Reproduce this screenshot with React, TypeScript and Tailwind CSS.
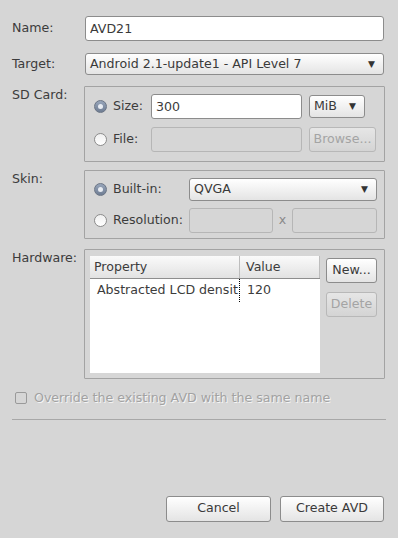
import React from 'react'

const btn =
  'flex items-center justify-center rounded-[3px] border border-[#8c8c8c] bg-gradient-to-b from-white to-[#e4e4e4] text-[#3a3a3a]'
const btnDisabled =
  'flex items-center justify-center rounded-[3px] border border-[#b8b8b8] bg-gradient-to-b from-[#e6e6e6] to-[#d4d4d4] text-[#a4a4a4]'
const field = 'rounded-[3px] border border-[#8c8c8c] bg-white px-[4px] text-[#3a3a3a] outline-none'
const fieldDisabled = 'rounded-[3px] border border-[#b6b6b6] bg-[#d6d6d6]'
const group = 'rounded-[1px] border border-[#a3a3a3]'

function Radio({ checked, label, width }: { checked: boolean; label: string; width: string }) {
  return (
    <div className={`flex items-center ${width}`}>
      {checked ? (
        <span className="flex h-[13px] w-[13px] items-center justify-center rounded-full border border-[#6b7585] bg-gradient-to-b from-[#98a6bb] to-[#6f7d93]">
          <span className="h-[5px] w-[5px] rounded-full bg-[#e8ecf2]" />
        </span>
      ) : (
        <span className="h-[13px] w-[13px] rounded-full border border-[#8c8c8c] bg-gradient-to-b from-[#f0f0f0] to-white" />
      )}
      <span className="ml-[6px]">{label}</span>
    </div>
  )
}

function Select({ value, className }: { value: string; className: string }) {
  return (
    <div className={`${btn} !justify-between pl-[4px] pr-[8px] ${className}`}>
      <span>{value}</span>
      <span className="text-[9px] text-[#333]">▼</span>
    </div>
  )
}

export default function App() {
  return (
    <div
      className="flex h-[538px] w-[398px] flex-col bg-[#d6d6d6] pl-[12px] pr-[14px] pt-[16px] text-[12.6px] leading-none text-[#3c3c3c]"
      style={{ fontFamily: '"DejaVu Sans", sans-serif' }}
    >
      {/* Name */}
      <div className="flex items-center">
        <div className="w-[73px]">Name:</div>
        <input className={`${field} h-[25px] flex-1`} defaultValue="AVD21" />
      </div>

      {/* Target */}
      <div className="mt-[12px] flex items-center">
        <div className="w-[73px]">Target:</div>
        <Select value="Android 2.1-update1 - API Level 7" className="h-[22px] flex-1" />
      </div>

      {/* SD Card */}
      <div className="mt-[11px] flex">
        <div className="w-[72px] pt-[3px]">SD Card:</div>
        <div className={`${group} mr-[-1px] flex h-[76px] flex-1 flex-col pl-[9px] pr-[7px] pt-[7px]`}>
          <div className="flex items-center">
            <Radio checked label="Size:" width="w-[57px]" />
            <input className={`${field} h-[25px] w-[151px]`} defaultValue="300" />
            <Select value="MiB" className="ml-[7px] h-[23px] w-[56px]" />
          </div>
          <div className="mt-[8px] flex items-center">
            <Radio checked={false} label="File:" width="w-[57px]" />
            <div className={`${fieldDisabled} h-[25px] w-[151px]`} />
            <div className={`${btnDisabled} ml-[7px] h-[25px] w-[67px]`}>Browse...</div>
          </div>
        </div>
      </div>

      {/* Skin */}
      <div className="mt-[8px] flex">
        <div className="w-[72px] pt-[3px]">Skin:</div>
        <div className={`${group} mr-[-1px] flex h-[69px] flex-1 flex-col pl-[9px] pr-[7px] pt-[7px]`}>
          <div className="flex items-center">
            <Radio checked label="Built-in:" width="w-[95px]" />
            <Select value="QVGA" className="h-[23px] flex-1" />
          </div>
          <div className="mt-[7px] flex items-center">
            <Radio checked={false} label="Resolution:" width="w-[95px]" />
            <div className={`${fieldDisabled} h-[25px] w-[84px]`} />
            <span className="w-[19px] text-center text-[#8a8a8a]">x</span>
            <div className={`${fieldDisabled} h-[25px] flex-1`} />
          </div>
        </div>
      </div>

      {/* Hardware */}
      <div className="mt-[10px] flex">
        <div className="w-[72px] pt-[3px]">Hardware:</div>
        <div className={`${group} mr-[-1px] flex h-[130px] flex-1 pb-[5px] pl-[5px] pr-[7px] pt-[6px]`}>
          <div className="flex w-[230px] flex-col bg-white">
            <div className="flex h-[23px] items-center border-b border-[#8e8e8e] bg-gradient-to-b from-[#fafafa] to-[#e2e2e2]">
              <div className="flex h-full w-[150px] items-center border-r border-[#bdbdbd] pl-[4px]">Property</div>
              <div className="flex h-full flex-1 items-center border-r border-[#bdbdbd] pl-[6px]">Value</div>
            </div>
            <div className="flex h-[23px] items-center">
              <div className="flex h-full w-[150px] items-center overflow-hidden whitespace-nowrap border-r border-dotted border-black pl-[7px]">
                Abstracted LCD densit
              </div>
              <div className="pl-[7px]">120</div>
            </div>
          </div>
          <div className="ml-[6px] flex flex-1 flex-col">
            <div className={`${btn} mt-[2px] h-[25px]`}>New...</div>
            <div className={`${btnDisabled} mt-[9px] h-[25px]`}>Delete</div>
          </div>
        </div>
      </div>

      {/* Override */}
      <div className="mt-[13px] flex items-center pl-[3px]">
        <span className="h-[12px] w-[12px] rounded-[2px] border border-[#9a9a9a] bg-[#d6d6d6]" />
        <span className="ml-[7px] text-[#a2a2a2] [text-shadow:1px_1px_0_#f4f4f4]">
          Override the existing AVD with the same name
        </span>
      </div>

      <div className="mt-[14px] h-px w-[374px] bg-[#a8a8a8]" />

      {/* Buttons */}
      <div className="mt-[76px] flex justify-end">
        <div className={`${btn} h-[26px] w-[105px]`}>Cancel</div>
        <div className={`${btn} ml-[9px] h-[26px] w-[104px]`}>Create AVD</div>
      </div>
    </div>
  )
}
